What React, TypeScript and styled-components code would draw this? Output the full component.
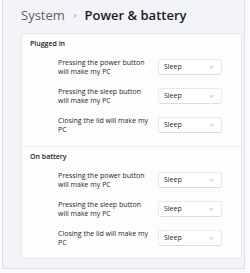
import React from "react";
import styled, { createGlobalStyle } from "styled-components";

const Global = createGlobalStyle`
  html, body { margin: 0; padding: 0; background: #ffffff; }
  body { font-family: "Open Sans", "Noto Sans", sans-serif; }
`;

const Page = styled.div`
  width: 250px;
  height: 273px;
  background: #fafbfc;
  overflow: hidden;
`;

const Window = styled.div`
  margin-left: 2px;
  width: 243px;
  height: 269px;
  border: 1px solid #dcdfe6;
  border-top: none;
  background: #f2f4f8;
  padding: 5px 2px 0 18px;
  box-sizing: border-box;
  display: flex;
  flex-direction: column;
  gap: 8px;
`;

const Header = styled.div`
  height: 20px;
  display: flex;
  align-items: center;
  font-size: 13px;
  line-height: 20px;
  white-space: nowrap;
`;

const Crumb = styled.span`
  color: #5f6064;
`;

const Sep = styled.span`
  color: #7a7b7f;
  font-size: 9px;
  margin: 0 8px 0 9px;
`;

const Current = styled.span`
  color: #1b1b1b;
  font-weight: 600;
`;

const Card = styled.div`
  background: #fdfdfe;
  border: 1px solid #e6e8ec;
  border-radius: 3px;
  display: flex;
  flex-direction: column;
`;

const Section = styled.div`
  padding: 5px 8px 7px;
  & + & {
    border-top: 1px solid #eceef1;
  }
  &:last-child {
    padding-bottom: 6px;
  }
`;

const SectionTitle = styled.div`
  height: 10px;
  line-height: 10px;
  font-size: 7px;
  font-weight: 600;
  color: #1b1b1b;
`;

const Rows = styled.div`
  margin-top: 3px;
  padding-left: 28px;
  display: flex;
  flex-direction: column;
`;

const Row = styled.div`
  height: 29px;
  display: grid;
  grid-template-columns: 100px 64px;
  align-items: center;
`;

const Label = styled.div`
  font-size: 7px;
  line-height: 9px;
  color: #1f1f1f;
  padding-right: 8px;
`;

const Select = styled.div`
  height: 16px;
  box-sizing: border-box;
  background: #ffffff;
  border: 1px solid #e8e9ec;
  border-bottom-color: #dcdde1;
  border-radius: 3px;
  display: flex;
  align-items: center;
  justify-content: space-between;
  padding: 0 7px 0 5px;
  font-size: 7px;
  color: #1f1f1f;
`;

const Chevron = () => (
  <svg width="5" height="4" viewBox="0 0 5 4" fill="none">
    <path d="M0.6 1.2 L2.5 3 L4.4 1.2" stroke="#8a8b8f" strokeWidth="0.7" />
  </svg>
);

const rows = [
  "Pressing the power button will make my PC",
  "Pressing the sleep button will make my PC",
  "Closing the lid will make my PC",
];

const sections = ["Plugged in", "On battery"];

export default function App() {
  return (
    <>
      <Global />
      <Page>
        <Window>
          <Header>
            <Crumb>System</Crumb>
            <Sep>›</Sep>
            <Current>Power &amp; battery</Current>
          </Header>
          <Card>
            {sections.map((s) => (
              <Section key={s}>
                <SectionTitle>{s}</SectionTitle>
                <Rows>
                  {rows.map((r) => (
                    <Row key={r}>
                      <Label>{r}</Label>
                      <Select>
                        <span>Sleep</span>
                        <Chevron />
                      </Select>
                    </Row>
                  ))}
                </Rows>
              </Section>
            ))}
          </Card>
        </Window>
      </Page>
    </>
  );
}
